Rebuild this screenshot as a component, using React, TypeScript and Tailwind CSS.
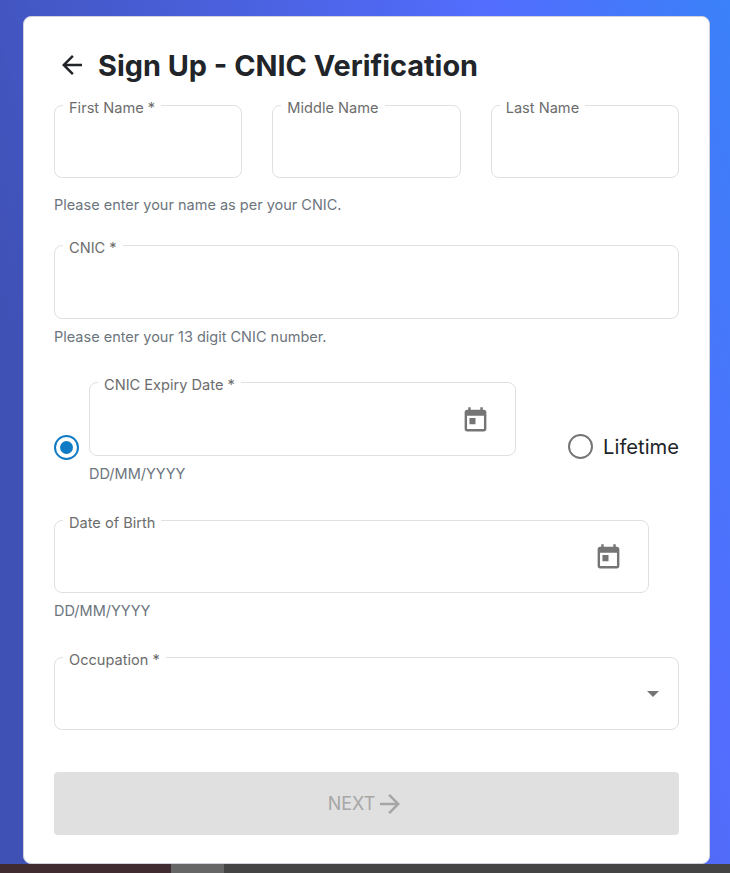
import type { ReactNode } from "react";

function Field({ label, className, children }: { label: string; className?: string; children?: ReactNode }) {
  return (
    <div className={`relative flex items-center justify-end rounded-lg border border-[#e0e0e0] ${className ?? "h-[73px]"}`}>
      <span className="absolute -top-[8px] left-[8px] bg-white px-[6px] text-[14.6px] leading-[20px] text-[#6c6c6c]">{label}</span>
      {children}
    </div>
  );
}

function Helper({ children }: { children: ReactNode }) {
  return <p className="h-5 text-[14.5px] leading-5 text-[#6c757d]">{children}</p>;
}

function CalendarIcon() {
  return (
    <svg viewBox="0 0 24 24" className="mt-[2px] mr-[25px] h-[29px] w-[29px] fill-[#757575]">
      <path d="M19 3h-1V1h-2v2H8V1H6v2H5c-1.11 0-1.99.9-1.99 2L3 19c0 1.1.89 2 2 2h14c1.1 0 2-.9 2-2V5c0-1.1-.9-2-2-2zm0 16H5V8h14v11zM7 10h5v5H7z" />
    </svg>
  );
}

export default function App() {
  return (
    <div className="flex h-[873px] flex-col overflow-hidden font-['Inter',sans-serif]">
      <div className="flex-1 bg-[linear-gradient(72deg,#3f51b5_0%,#3f51b5_18%,#536dfe_76%,#2196f3_125%)] px-[20px] pt-[16px] pl-[23px]">
        <div className="h-[848px] w-[687px] rounded-lg border border-[#cfd2dc] bg-white px-[30px] pt-[25px]">
          <div className="flex h-[46px] items-center">
            <svg viewBox="0 0 24 24" className="ml-[3px] h-[30px] w-[30px] fill-[#212529]">
              <path d="M20 11H7.83l5.59-5.59L12 4l-8 8 8 8 1.41-1.41L7.83 13H20v-2z" />
            </svg>
            <h1 className="mt-[2px] ml-[11px] text-[28.85px] font-bold text-[#212529]">Sign Up - CNIC Verification</h1>
          </div>

          <div className="mt-[17px] grid grid-cols-3 gap-[30px]">
            <Field label="First Name *" />
            <Field label="Middle Name" />
            <Field label="Last Name" />
          </div>
          <div className="mt-[17px]">
            <Helper>Please enter your name as per your CNIC.</Helper>
          </div>

          <div className="mt-[30px]">
            <Field label="CNIC *" className="h-[74px]" />
          </div>
          <div className="mt-[8px]">
            <Helper>Please enter your 13 digit CNIC number.</Helper>
          </div>

          <div className="mt-[35px] flex items-start">
            <div className="mt-[53px] flex h-[25px] w-[25px] items-center justify-center rounded-full border-[2.5px] border-[#0f7bc4]">
              <div className="h-[13px] w-[13px] rounded-full bg-[#0f7bc4]" />
            </div>
            <div className="ml-[10px] w-[427px]">
              <Field label="CNIC Expiry Date *" className="h-[74px]">
                <CalendarIcon />
              </Field>
              <div className="mt-[8px]">
                <Helper>DD/MM/YYYY</Helper>
              </div>
            </div>
            <div className="mt-[52px] ml-auto flex items-center gap-[10px]">
              <div className="h-[25px] w-[25px] rounded-full border-[2.5px] border-[#757575]" />
              <span className="text-[20.2px] leading-[25px] text-[#212529]">Lifetime</span>
            </div>
          </div>

          <div className="mt-[36px] w-[595px]">
            <Field label="Date of Birth">
              <CalendarIcon />
            </Field>
            <div className="mt-[8px]">
              <Helper>DD/MM/YYYY</Helper>
            </div>
          </div>

          <div className="mt-[36px]">
            <Field label="Occupation *">
              <svg viewBox="0 0 12 6" className="mr-[19px] h-[6px] w-[12px] fill-[#757575]">
                <path d="M0 0h12L6 6z" />
              </svg>
            </Field>
          </div>

          <button className="mt-[42px] flex h-[63px] w-full items-center justify-center rounded bg-[#e0e0e0] text-[18px] text-[#a6a6a6]">
            NEXT
            <svg viewBox="0 0 24 24" className="h-[30px] w-[30px] fill-[#a6a6a6]">
              <path d="M12 4l-1.41 1.41L16.17 11H4v2h12.17l-5.58 5.59L12 20l8-8z" />
            </svg>
          </button>
        </div>
      </div>
      <div className="flex h-[9px] shrink-0 bg-[#444444]">
        <div className="w-[171px] bg-[#402b30]" />
        <div className="w-[53px] bg-[#666666]" />
      </div>
    </div>
  );
}
